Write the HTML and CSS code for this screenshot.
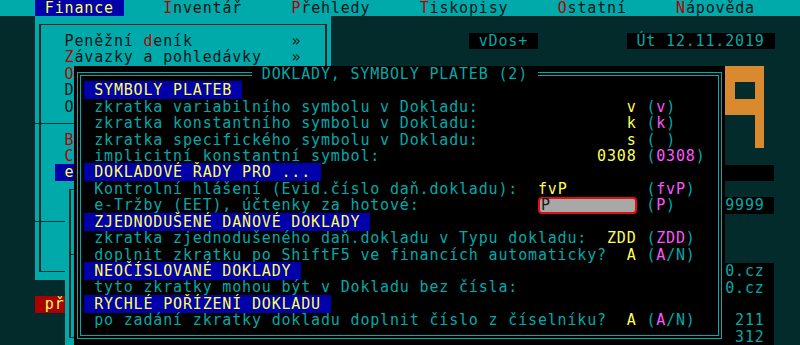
FILE: index.html
```html
<!DOCTYPE html>
<html lang="cs">
<head>
    <meta charset="UTF-8">
    <meta name="viewport" content="width=device-width, initial-scale=1.0">
    <title>Finance - vDos+</title>
    <link rel="stylesheet" href="styles.css">
</head>
<body>
<div class="screen">

    <!-- Top menu -->
    <div class="menubar"><span class="menu-active"> Finance </span>    <span class="hot">I</span>nventář     <span class="hot">P</span>řehledy     <span class="hot">T</span>iskopisy     <span class="hot">O</span>statní     <span class="hot">N</span>ápověda</div>

    <!-- Status boxes -->
    <div class="tag tag-vdos"> vDos+ </div>
    <div class="tag tag-date"> Út 12.11.2019 </div>

    <!-- Logo -->
    <svg class="logo" viewBox="0 0 4 5" preserveAspectRatio="none" aria-hidden="true">
        <path d="M0 0H4V5H3V3H0ZM1 1V2H3V1Z" fill="#d98a2e" fill-rule="evenodd" shape-rendering="crispEdges"/>
    </svg>

    <!-- Background list on the right -->
    <div class="side-list">
        <div class="cell on"></div>
        <div class="cell"></div>
        <div class="cell on">9999</div>
        <div class="cell"></div>
        <div class="cell"></div>
        <div class="cell"></div>
        <div class="cell on">0.cz</div>
        <div class="cell on">0.cz</div>
        <div class="cell on"></div>
        <div class="cell on"> 211</div>
        <div class="cell on"> 312</div>
    </div>

    <!-- Finance submenu -->
    <div class="win submenu">
        <div class="row">   Peněžní <span class="hot">d</span>eník          »</div>
        <div class="row">   <span class="hot">Z</span>ávazky a pohledávky   »</div>
        <div class="row">   <span class="hot">O</span>statní doklady</div>
        <div class="row">   Doklady pokladny</div>
        <div class="row">   Odpisy majetku</div>
        <div class="row sep"></div>
        <div class="row">   <span class="hot">B</span>anka</div>
        <div class="row">   <span class="hot">Č</span>íselníky</div>
        <div class="row">  <span class="item-active"> e-Tržby (EET)          </span></div>
        <div class="row">   Účetní deník</div>
        <div class="row">   Uzávěrky</div>
        <div class="row sep"></div>
        <div class="row">   Nastavení</div>
        <div class="row">   Konec</div>
    </div>

    <div class="stub"> přehled</div>

    <!-- Nested submenu -->
    <div class="win subsub">
        <div class="row">  Tržby</div>
        <div class="row">  Účtenky</div>
        <div class="row">  Storna</div>
        <div class="row sep"></div>
        <div class="row">  Nastavení</div>
        <div class="row">  Certifikát</div>
        <div class="row">  Test spojení</div>
        <div class="row">  Protokol</div>
    </div>

    <!-- Dialog -->
    <div class="win dialog">
        <div class="dlg-title"> DOKLADY, SYMBOLY PLATEB (2) </div>
        <div class="line"><span class="band"> SYMBOLY PLATEB </span></div>
        <div class="line"> zkratka variabilního symbolu v Dokladu:               <span class="val">v</span> (<span class="def">v</span>)</div>
        <div class="line"> zkratka konstantního symbolu v Dokladu:               <span class="val">k</span> (<span class="def">k</span>)</div>
        <div class="line"> zkratka specifického symbolu v Dokladu:               <span class="val">s</span> (<span class="def"> </span>)</div>
        <div class="line"> implicitní konstantní symbol:                      <span class="val">0308</span> (<span class="def">0308</span>)</div>
        <div class="line"><span class="band"> DOKLADOVÉ ŘADY PRO ... </span></div>
        <div class="line"> Kontrolní hlášení (Evid.číslo daň.dokladu):  <span class="val">fvP</span>        (<span class="def">fvP</span>)</div>
        <div class="line"> e-Tržby (EET), účtenky za hotové:            <span class="field">P</span> (<span class="def">P</span>)</div>
        <div class="line"><span class="band"> ZJEDNODUŠENÉ DAŇOVÉ DOKLADY </span></div>
        <div class="line"> zkratka zjednodušeného daň.dokladu v Typu dokladu:  <span class="val">ZDD</span> (<span class="def">ZDD</span>)</div>
        <div class="line"> doplnit zkratku po ShiftF5 ve financích automaticky?  <span class="val">A</span> (<span class="def">A</span>/N)</div>
        <div class="line"><span class="band"> NEOČÍSLOVANÉ DOKLADY </span></div>
        <div class="line"> tyto zkratky mohou být v Dokladu bez čísla:</div>
        <div class="line"><span class="band"> RYCHLÉ POŘÍZENÍ DOKLADU </span></div>
        <div class="line"> po zadání zkratky dokladu doplnit číslo z číselníku?  <span class="val">A</span> (<span class="def">A</span>/N)</div>
    </div>

</div>
</body>
</html>
```

FILE: styles.css
```css
:root {
    --cw: 9.86px;
    --rh: 16.45px;
    --x0: 35px;
    --bg: #032b2b;
    --teal: #00aaaa;
    --ink: #061616;
    --red: #b80000;
    --blue: #0000aa;
    --yellow: #ffff55;
    --magenta: #ff55ff;
}

html,
body {
    margin: 0;
    padding: 0;
}

body {
    width: 800px;
    height: 345px;
    overflow: hidden;
    background-color: var(--bg);
    font-family: "DejaVu Sans Mono", "Liberation Mono", monospace;
    font-size: 15px;
    letter-spacing: 0.83px;
    line-height: var(--rh);
}

.screen {
    position: relative;
    width: 800px;
    height: 345px;
    overflow: hidden;
}

/* menu bar */
.menubar {
    height: var(--rh);
    padding-left: var(--x0);
    background-color: var(--teal);
    color: var(--ink);
    white-space: pre;
}

.menu-active {
    background-color: var(--blue);
    color: var(--yellow);
}

.hot {
    color: var(--red);
}

/* small boxes on the desktop */
.tag {
    position: absolute;
    top: calc(2 * var(--rh));
    height: var(--rh);
    background-color: #000;
    color: var(--teal);
    white-space: pre;
}

.tag-vdos {
    left: calc(var(--x0) + 44 * var(--cw));
}

.tag-date {
    left: calc(var(--x0) + 60 * var(--cw));
}

.logo {
    position: absolute;
    left: calc(var(--x0) + 70 * var(--cw));
    top: calc(4 * var(--rh));
    width: calc(4 * var(--cw));
    height: calc(5 * var(--rh));
}

.side-list {
    position: absolute;
    left: calc(var(--x0) + 70 * var(--cw));
    top: calc(10 * var(--rh));
    width: calc(5 * var(--cw));
    color: var(--teal);
}

.cell {
    height: var(--rh);
    white-space: pre;
}

.cell.on {
    background-color: #000;
}

/* windows */
.win {
    position: absolute;
    background-color: var(--teal);
    color: var(--ink);
    box-sizing: border-box;
}

.win .row {
    height: var(--rh);
    white-space: pre;
    overflow: hidden;
}

.submenu,
.subsub {
    padding-top: var(--rh);
}

.submenu::before,
.subsub::before {
    content: "";
    position: absolute;
    left: calc(var(--cw) / 2 - 1px);
    right: calc(var(--cw) / 2 - 1px);
    top: calc(var(--rh) / 2 - 0.5px);
    bottom: calc(var(--rh) / 2 - 0.5px);
    border: 1px solid var(--bg);
    border-left-width: 2px;
    border-right-width: 2px;
    pointer-events: none;
}

.submenu {
    left: var(--x0);
    top: var(--rh);
    width: calc(30 * var(--cw));
    height: calc(16 * var(--rh));
}

.submenu .sep::before,
.subsub .sep::before {
    content: "";
    display: block;
    margin-top: calc(var(--rh) / 2 - 0.5px);
    border-top: 1px solid var(--bg);
}

.submenu .sep::before {
    margin-right: calc(var(--cw) / 2);
}

.subsub .sep::before {
    margin-left: calc(var(--cw) / 2);
}

.item-active {
    background-color: var(--blue);
    color: var(--yellow);
}

.stub {
    position: absolute;
    left: var(--x0);
    top: calc(18 * var(--rh));
    height: var(--rh);
    background-color: #aa0000;
    color: var(--yellow);
    white-space: pre;
}

.subsub {
    left: calc(var(--x0) + 3 * var(--cw));
    top: calc(11 * var(--rh));
    width: calc(22 * var(--cw));
    height: calc(10 * var(--rh));
}

/* dialog */
.dialog {
    left: calc(var(--x0) + 4 * var(--cw));
    top: calc(4 * var(--rh));
    width: calc(66 * var(--cw));
    height: calc(17 * var(--rh));
    padding: var(--rh) 0 0 var(--cw);
    background-color: #000;
    color: var(--teal);
}

.dialog::before {
    content: "";
    position: absolute;
    left: calc(var(--cw) / 2 - 2px);
    right: calc(var(--cw) / 2 - 2px);
    top: calc(var(--rh) / 2 - 2px);
    bottom: calc(var(--rh) / 2 - 2px);
    border: 4px double var(--teal);
    pointer-events: none;
}

.dlg-title {
    position: absolute;
    top: 0;
    left: calc(18 * var(--cw));
    height: var(--rh);
    background-color: #000;
    white-space: pre;
    z-index: 1;
}

.line {
    height: var(--rh);
    white-space: pre;
}

.band {
    background-color: var(--blue);
    color: var(--yellow);
}

.val {
    color: var(--yellow);
}

.def {
    color: var(--magenta);
}

.field {
    display: inline-block;
    box-sizing: border-box;
    width: calc(10 * var(--cw));
    height: var(--rh);
    vertical-align: top;
    padding-left: 1px;
    border: 2px solid #e01010;
    border-radius: 4px;
    background-color: #a8a8a8;
    color: #1a1a1a;
    line-height: calc(var(--rh) - 4px);
}
```
